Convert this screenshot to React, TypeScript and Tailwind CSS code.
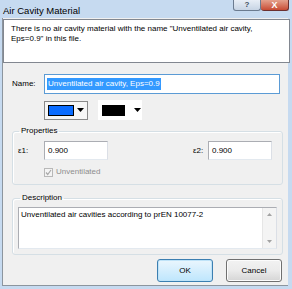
import React from 'react';

const font = { fontFamily: '"Liberation Sans", Arial, sans-serif' };

function Arrow() {
  return (
    <svg width="7" height="4" viewBox="0 0 7 4">
      <path d="M0 0h7L3.5 4z" fill="#000" />
    </svg>
  );
}

function App() {
  return (
    <div
      className="w-[292px] h-[289px] bg-[#c6daf0] flex flex-col text-[8px] leading-[10px] text-black overflow-hidden"
      style={font}
    >
      {/* Title bar */}
      <div className="h-[18px] flex items-start shrink-0">
        <div className="pl-[3px] pt-[5px] text-[9.5px] leading-[11px]">Air Cavity Material</div>
        <div className="ml-auto mr-[3px] flex">
          <div className="w-[28px] h-[11px] border border-t-0 border-[#6b7b90] rounded-b-[3px] bg-gradient-to-b from-[#e8eef6] to-[#c7d4e4] flex items-center justify-center text-[8px] font-bold text-[#3f4c5e]">
            ?
          </div>
          <div className="w-[28px] h-[11px] border border-t-0 border-l-0 border-[#6b3030] rounded-b-[3px] bg-gradient-to-b from-[#e4a08c] to-[#c74a33] flex items-center justify-center text-[9px] font-bold text-white">
            X
          </div>
        </div>
      </div>

      {/* Client area */}
      <div className="ml-[2px] mr-[4px] h-[268px] bg-[#f0f0f0] border-l border-b border-[#8c959e] flex flex-col">
        {/* Message */}
        <div className="mt-[1px] h-[44px] bg-white border border-[#828790] pl-[7px] pt-[4px] pr-[4px] w-[287px]">
          There is no air cavity material with the name "Unventilated air cavity,
          <br />
          Eps=0.9" in this file.
        </div>

        {/* Name row */}
        <div className="mt-[11px] flex items-center">
          <div className="w-[41px] pl-[9px]">Name:</div>
          <div className="w-[236px] h-[20px] bg-white border border-[#5b9bd5] flex items-center pl-[2px]">
            <span className="bg-[#3399ff] text-white px-[1px] leading-[12px]">Unventilated air cavity, Eps=0.9</span>
          </div>
        </div>

        {/* Colour row */}
        <div className="mt-[6px] flex items-center pl-[41px] gap-[10px]">
          <div className="w-[44px] h-[19px] border border-[#8a8a8a] bg-[#f6f6f6] flex items-center pl-[3px] gap-[3px]">
            <div className="w-[26px] h-[11px] bg-[#0a6cff] border border-black" />
            <Arrow />
          </div>
          <div className="w-[44px] h-[20px] bg-white flex items-center pl-[4px] gap-[9px]">
            <div className="w-[23px] h-[11px] bg-black" />
            <Arrow />
          </div>
        </div>

        {/* Properties */}
        <fieldset className="mt-[6px] ml-[9px] w-[271px] h-[59px] border border-[#d5dfe5] rounded-[3px] shadow-[inset_1px_1px_0_#fff] px-[4px]">
          <legend className="ml-[2px] px-[2px] leading-[10px]">Properties</legend>
          <div className="mt-[5px] flex items-center">
            <div className="w-[27px] pl-[1px]">ε1:</div>
            <div className="w-[64px] h-[19px] bg-white border border-[#abadb3] border-r-[#dbdfe6] border-b-[#e3e9ef] flex items-center pl-[3px]">
              0.900
            </div>
            <div className="ml-auto w-[15px]">ε2:</div>
            <div className="w-[64px] h-[19px] mr-[6px] bg-white border border-[#abadb3] border-r-[#dbdfe6] border-b-[#e3e9ef] flex items-center pl-[3px]">
              0.900
            </div>
          </div>
          <div className="mt-[7px] ml-[27px] flex items-center gap-[3px] text-[#8d8d8d]">
            <div className="w-[9px] h-[9px] border border-[#b8b8b8] bg-[#f4f4f4] flex items-center justify-center">
              <svg width="7" height="7" viewBox="0 0 7 7">
                <path d="M1 3.5l1.7 2L6 1" stroke="#a8a8a8" strokeWidth="1.2" fill="none" />
              </svg>
            </div>
            Unventilated
          </div>
        </fieldset>

        {/* Description */}
        <fieldset className="mt-[8px] ml-[9px] w-[271px] h-[62px] border border-[#d5dfe5] rounded-[3px] shadow-[inset_1px_1px_0_#fff] px-[5px]">
          <legend className="ml-[2px] px-[2px] leading-[10px]">Description</legend>
          <div className="mt-[4px] h-[42px] bg-white border border-[#abadb3] border-r-[#dbdfe6] border-b-[#e3e9ef] flex">
            <div className="flex-1 pl-[2px] pt-[2px]">Unventilated air cavities according to prEN 10077-2</div>
            <div className="w-[14px] bg-[#f4f4f4] border-l border-[#e6e6e6] flex flex-col items-center justify-between py-[5px]">
              <svg width="5" height="3" viewBox="0 0 5 3"><path d="M0 3h5L2.5 0z" fill="#a3a3a3" /></svg>
              <svg width="5" height="3" viewBox="0 0 5 3"><path d="M0 0h5L2.5 3z" fill="#a3a3a3" /></svg>
            </div>
          </div>
        </fieldset>

        {/* Buttons */}
        <div className="mt-[4px] flex justify-end pr-[6px] gap-[13px]">
          <button className="w-[56px] h-[23px] rounded-[3px] border border-[#3c7fb1] bg-gradient-to-b from-[#eaf6fd] to-[#bee6fd] shadow-[inset_0_0_0_1px_#bfe3f8] text-[8px]">
            OK
          </button>
          <button className="w-[56px] h-[23px] rounded-[3px] border border-[#707070] bg-gradient-to-b from-[#f2f2f2] via-[#ebebeb] to-[#d5d5d5] shadow-[inset_0_0_0_1px_#fcfcfc] text-[8px]">
            Cancel
          </button>
        </div>
      </div>
    </div>
  );
}

export default App;
